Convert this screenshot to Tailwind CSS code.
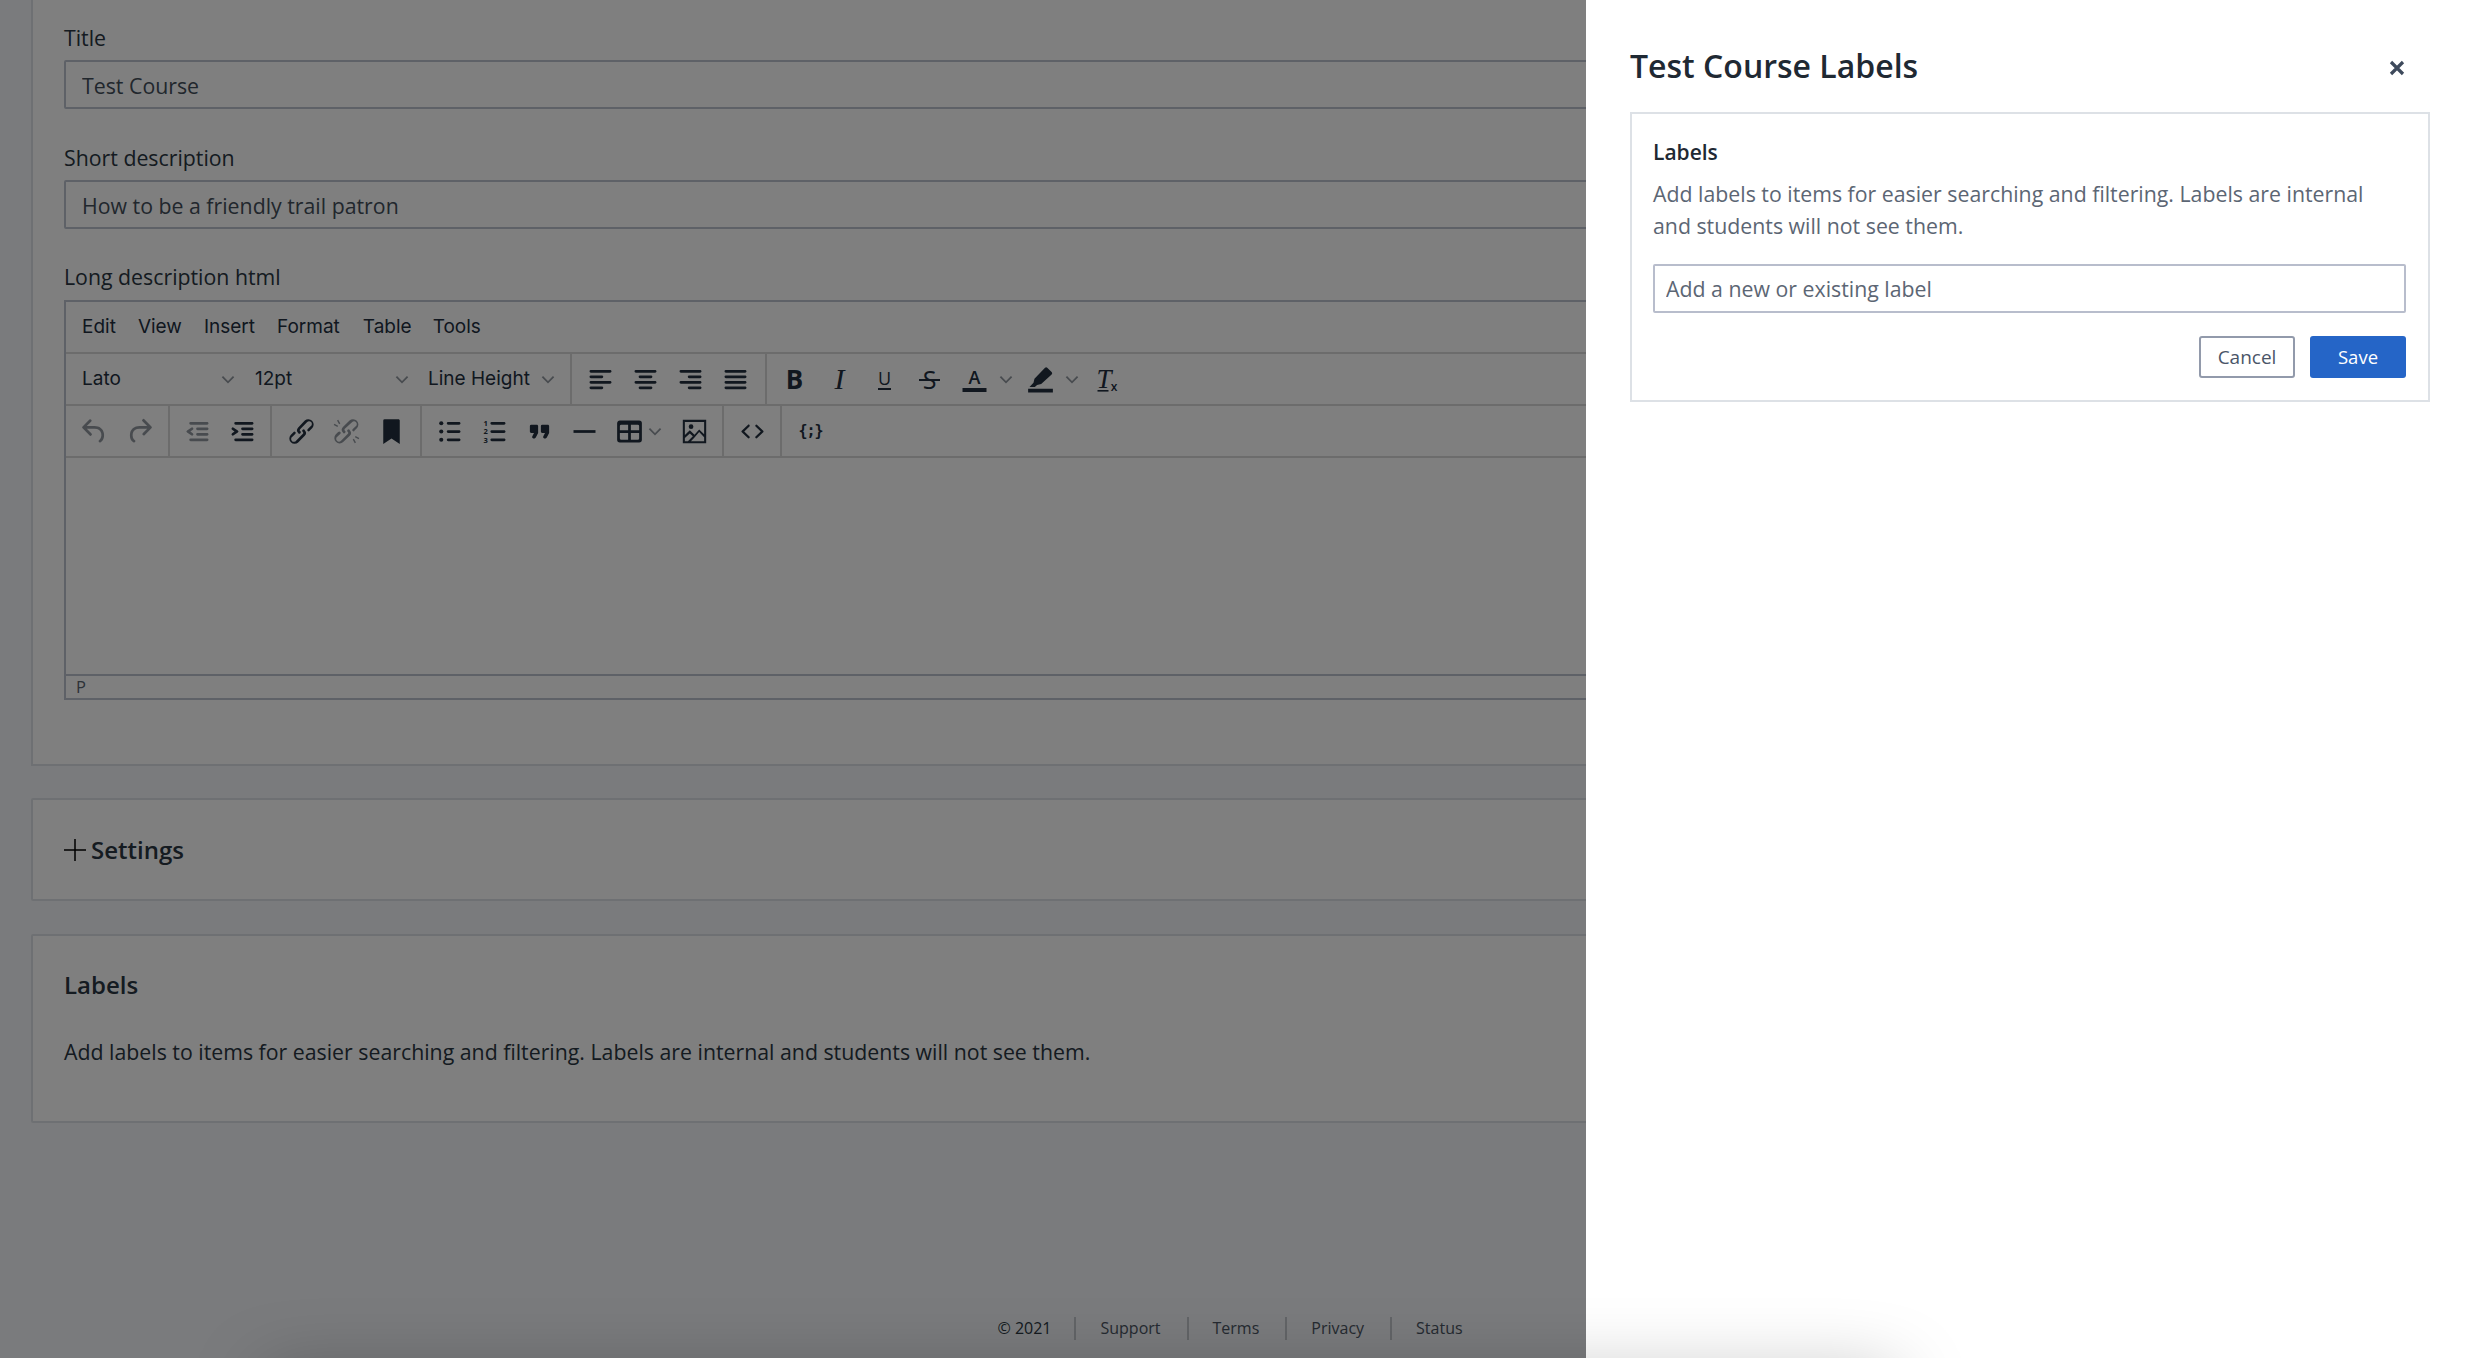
<!DOCTYPE html>
<html lang="en">
<head>
    <meta charset="UTF-8">
    <title>Test Course Labels</title>
    <script src="https://cdn.jsdelivr.net/npm/@tailwindcss/browser@4"></script>
</head>
<body class="bg-[#f4f6fa] font-['Open_Sans',sans-serif] text-[#2a3642] antialiased">
<div class="relative w-[2466px] h-[1358px] overflow-hidden">

    <!-- page behind the drawer -->
    <main class="w-[2404px] ml-[31px]">
        <section class="h-[766px] bg-white border-2 border-t-0 border-[#dde1e6] pt-[24px] px-[31px]">
            <label class="block h-[28px] text-[21.3px] leading-[28px]">Title</label>
            <input class="block w-full h-[49px] mt-[8px] pt-[1px] px-[16px] border-2 border-[#bcc2cf] rounded-[2px] text-[21.3px] text-[#434e5a] font-['Open_Sans',sans-serif]" value="Test Course">
            <label class="block h-[28px] mt-[35px] text-[21.3px] leading-[28px]">Short description</label>
            <input class="block w-full h-[49px] mt-[8px] pt-[1px] px-[16px] border-2 border-[#bcc2cf] rounded-[2px] text-[21.3px] text-[#434e5a] font-['Open_Sans',sans-serif]" value="How to be a friendly trail patron">
            <label class="block h-[28px] mt-[34px] text-[21.3px] leading-[28px]">Long description html</label>

            <div class="flex flex-col h-[400px] mt-[9px] border-2 border-[#bcc2cf] font-['Inter',sans-serif] text-[#222f3e]">
                <div class="flex items-center h-[52px] shrink-0 pl-[6px] pt-[1px] border-b-2 border-[#d8d8d8] text-[19px]">
                    <span class="px-[10px]">Edit</span>
                    <span class="pl-[12px] pr-[11px]">View</span>
                    <span class="px-[11px]">Insert</span>
                    <span class="px-[11px]">Format</span>
                    <span class="pl-[12px] pr-[10px]">Table</span>
                    <span class="px-[11px]">Tools</span>
                </div>

                <!-- toolbar row 1 -->
                <div class="flex h-[52px] shrink-0 border-b-2 border-[#d8d8d8]">
                    <div class="flex items-center w-[505.5px] pl-[6px] pt-[1px] border-r-2 border-[#d8d8d8] text-[19px]">
                        <div class="flex items-center justify-between w-[172px] pl-[10px] pr-[9px]">
                            <span>Lato</span>
                            <svg viewBox="0 0 10 6" class="w-[14px] h-[9px] fill-none stroke-[#222f3e]/50 stroke-[1.3]"><path d="M1 1l4 4 4-4"/></svg>
                        </div>
                        <div class="flex items-center justify-between w-[174px] pl-[11px] pr-[9px]">
                            <span>12pt</span>
                            <svg viewBox="0 0 10 6" class="w-[14px] h-[9px] fill-none stroke-[#222f3e]/50 stroke-[1.3]"><path d="M1 1l4 4 4-4"/></svg>
                        </div>
                        <div class="flex items-center justify-between w-[146px] pl-[10px] pr-[9px]">
                            <span class="whitespace-nowrap">Line Height</span>
                            <svg viewBox="0 0 10 6" class="w-[14px] h-[9px] fill-none stroke-[#222f3e]/50 stroke-[1.3]"><path d="M1 1l4 4 4-4"/></svg>
                        </div>
                    </div>
                    <div class="flex items-center justify-center w-[195px] border-r-2 border-[#d8d8d8]">
                        <div class="flex items-center justify-center w-[45px]"><svg viewBox="0 0 24 24" class="size-[33px] fill-[#222f3e]"><path d="M5 5h14c.6 0 1 .4 1 1s-.4 1-1 1H5a1 1 0 1 1 0-2Zm0 4h8c.6 0 1 .4 1 1s-.4 1-1 1H5a1 1 0 1 1 0-2Zm0 8h8c.6 0 1 .4 1 1s-.4 1-1 1H5a1 1 0 0 1 0-2Zm0-4h14c.6 0 1 .4 1 1s-.4 1-1 1H5a1 1 0 0 1 0-2Z"/></svg></div>
                        <div class="flex items-center justify-center w-[45px]"><svg viewBox="0 0 24 24" class="size-[33px] fill-[#222f3e]"><path d="M5 5h14c.6 0 1 .4 1 1s-.4 1-1 1H5a1 1 0 1 1 0-2Zm3 4h8c.6 0 1 .4 1 1s-.4 1-1 1H8a1 1 0 1 1 0-2Zm0 8h8c.6 0 1 .4 1 1s-.4 1-1 1H8a1 1 0 0 1 0-2Zm-3-4h14c.6 0 1 .4 1 1s-.4 1-1 1H5a1 1 0 0 1 0-2Z"/></svg></div>
                        <div class="flex items-center justify-center w-[45px]"><svg viewBox="0 0 24 24" class="size-[33px] fill-[#222f3e]"><path d="M5 5h14c.6 0 1 .4 1 1s-.4 1-1 1H5a1 1 0 1 1 0-2Zm6 4h8c.6 0 1 .4 1 1s-.4 1-1 1h-8a1 1 0 0 1 0-2Zm0 8h8c.6 0 1 .4 1 1s-.4 1-1 1h-8a1 1 0 0 1 0-2Zm-6-4h14c.6 0 1 .4 1 1s-.4 1-1 1H5a1 1 0 0 1 0-2Z"/></svg></div>
                        <div class="flex items-center justify-center w-[45px]"><svg viewBox="0 0 24 24" class="size-[33px] fill-[#222f3e]"><path d="M5 5h14c.6 0 1 .4 1 1s-.4 1-1 1H5a1 1 0 1 1 0-2Zm0 4h14c.6 0 1 .4 1 1s-.4 1-1 1H5a1 1 0 1 1 0-2Zm0 4h14c.6 0 1 .4 1 1s-.4 1-1 1H5a1 1 0 0 1 0-2Zm0 4h14c.6 0 1 .4 1 1s-.4 1-1 1H5a1 1 0 0 1 0-2Z"/></svg></div>
                    </div>
                    <div class="flex items-center pl-[5px]">
                        <div class="flex items-center justify-center w-[45px]"><svg viewBox="0 0 33 33" class="size-[33px] overflow-visible fill-[#222f3e]"><text x="16.5" y="26" text-anchor="middle" font-family="Open Sans" font-weight="700" font-size="26">B</text></svg></div>
                        <div class="flex items-center justify-center w-[45px]"><svg viewBox="0 0 33 33" class="size-[33px] overflow-visible fill-[#222f3e]"><text x="16.5" y="26" text-anchor="middle" font-family="Liberation Serif" font-style="italic" font-size="30">I</text></svg></div>
                        <div class="flex items-center justify-center w-[45px]"><svg viewBox="0 0 33 33" class="size-[33px] overflow-visible fill-[#222f3e]"><text x="16.5" y="22" text-anchor="middle" font-family="Open Sans" font-size="18">U</text><rect x="10" y="25" width="13" height="2"/></svg></div>
                        <div class="flex items-center justify-center w-[45px]"><svg viewBox="0 0 33 33" class="size-[33px] overflow-visible fill-[#222f3e]"><text x="16.5" y="26" text-anchor="middle" font-family="Open Sans" font-size="25">S</text><rect x="6" y="16" width="21" height="2"/></svg></div>
                        <div class="flex items-center w-[66.5px] pl-[6px]">
                            <svg viewBox="0 0 33 33" class="size-[33px] overflow-visible fill-[#222f3e]"><text x="16.5" y="21" text-anchor="middle" font-family="Open Sans" font-weight="600" font-size="18">A</text><rect x="4.5" y="25" width="24" height="4"/></svg>
                            <svg viewBox="0 0 10 6" class="w-[14px] h-[9px] ml-[8px] fill-none stroke-[#222f3e]/50 stroke-[1.3]"><path d="M1 1l4 4 4-4"/></svg>
                        </div>
                        <div class="flex items-center w-[66.5px] pl-[6px]">
                            <svg viewBox="0 0 24 24" class="size-[33px] fill-[#222f3e]"><path d="M15.3 3.4a1.2 1.2 0 0 1 1.6 0l3.2 3.2a1.2 1.2 0 0 1 0 1.7l-7.6 6.9-3 .8-1.6 1.4H4l2.9-3 .7-3L15.3 3.4ZM3 18.7h18V21.5H3z"/></svg>
                            <svg viewBox="0 0 10 6" class="w-[14px] h-[9px] ml-[8px] fill-none stroke-[#222f3e]/50 stroke-[1.3]"><path d="M1 1l4 4 4-4"/></svg>
                        </div>
                        <div class="flex items-center justify-center w-[45px]"><svg viewBox="0 0 33 33" class="size-[33px] overflow-visible fill-[#222f3e]"><text x="13" y="25" text-anchor="middle" font-family="Liberation Serif" font-style="italic" font-size="27">T</text><rect x="6.5" y="27" width="11" height="1.6"/><text x="23" y="28" text-anchor="middle" font-family="Open Sans" font-weight="600" font-size="12">x</text></svg></div>
                    </div>
                </div>

                <!-- toolbar row 2 -->
                <div class="flex h-[52px] shrink-0 border-b-2 border-[#d8d8d8]">
                    <div class="flex items-center justify-center w-[104px] border-r-2 border-[#d8d8d8]">
                        <div class="flex items-center justify-center w-[45px]"><svg viewBox="0 0 24 24" class="size-[33px] fill-[#222f3e]/50"><path d="M6.4 8H12c3.7 0 6.2 2 6.8 5.1.6 2.7-.4 5.6-2.3 6.8a1 1 0 0 1-1-1.8c1.1-.6 1.8-2.7 1.4-4.6-.5-2.1-2.1-3.5-4.9-3.5H6.4l3.3 3.3a1 1 0 1 1-1.4 1.4l-5-5a1 1 0 0 1 0-1.4l5-5a1 1 0 0 1 1.4 1.4L6.4 8Z"/></svg></div>
                        <div class="flex items-center justify-center w-[45px]"><svg viewBox="0 0 24 24" class="size-[33px] fill-[#222f3e]/50"><path d="M17.6 10H12c-2.8 0-4.4 1.4-4.9 3.5-.4 2 .3 4 1.4 4.6a1 1 0 1 1-1 1.8c-2-1.2-2.9-4.1-2.3-6.8.6-3 3-5.1 6.8-5.1h5.6l-3.3-3.3a1 1 0 1 1 1.4-1.4l5 5a1 1 0 0 1 0 1.4l-5 5a1 1 0 0 1-1.4-1.4l3.3-3.3Z"/></svg></div>
                    </div>
                    <div class="flex items-center justify-center w-[102px] border-r-2 border-[#d8d8d8]">
                        <div class="flex items-center justify-center w-[45px]"><svg viewBox="0 0 24 24" class="size-[33px] fill-[#222f3e]/50"><path d="M7 5h12c.6 0 1 .4 1 1s-.4 1-1 1H7a1 1 0 1 1 0-2Zm5 4h7c.6 0 1 .4 1 1s-.4 1-1 1h-7a1 1 0 0 1 0-2Zm0 4h7c.6 0 1 .4 1 1s-.4 1-1 1h-7a1 1 0 0 1 0-2Zm-5 4h12a1 1 0 0 1 0 2H7a1 1 0 0 1 0-2Zm1.6-3.8a1 1 0 0 1-1.2 1.6l-3-2a1 1 0 0 1 0-1.6l3-2a1 1 0 0 1 1.2 1.6L6.8 12l1.8 1.2Z"/></svg></div>
                        <div class="flex items-center justify-center w-[45px]"><svg viewBox="0 0 24 24" class="size-[33px] fill-[#222f3e]"><path d="M7 5h12c.6 0 1 .4 1 1s-.4 1-1 1H7a1 1 0 1 1 0-2Zm5 4h7c.6 0 1 .4 1 1s-.4 1-1 1h-7a1 1 0 0 1 0-2Zm0 4h7c.6 0 1 .4 1 1s-.4 1-1 1h-7a1 1 0 0 1 0-2Zm-5 4h12a1 1 0 0 1 0 2H7a1 1 0 0 1 0-2Zm-2.6-3.8L6.2 12l-1.8-1.2a1 1 0 0 1 1.2-1.6l3 2a1 1 0 0 1 0 1.6l-3 2a1 1 0 1 1-1.2-1.6Z"/></svg></div>
                    </div>
                    <div class="flex items-center justify-center w-[150px] border-r-2 border-[#d8d8d8]">
                        <div class="flex items-center justify-center w-[45px]"><svg viewBox="0 0 24 24" class="size-[33px] fill-[#222f3e]"><path d="M6.2 12.3a1 1 0 0 1 1.4 1.4l-2 2a2 2 0 1 0 2.6 2.8l4.8-4.8a1 1 0 0 0 0-1.4 1 1 0 1 1 1.4-1.3 2.9 2.9 0 0 1 0 4L9.6 20a3.9 3.9 0 0 1-5.5-5.5l2-2Zm11.6-.6a1 1 0 0 1-1.4-1.4l2-2a2 2 0 1 0-2.6-2.8L11 10.3a1 1 0 0 0 0 1.4 1 1 0 1 1-1.4 1.3 2.9 2.9 0 0 1 0-4L14.4 4a3.9 3.9 0 0 1 5.5 5.5l-2 2Z"/></svg></div>
                        <div class="flex items-center justify-center w-[45px]"><svg viewBox="0 0 24 24" class="size-[33px] fill-[#222f3e]/50"><path d="M6.2 12.3a1 1 0 0 1 1.4 1.4l-2.1 2a2 2 0 1 0 2.7 2.8l4.8-4.8a1 1 0 0 0 0-1.4 1 1 0 1 1 1.4-1.3 2.9 2.9 0 0 1 0 4l-4.8 4.7a3.9 3.9 0 0 1-5.5-5.5l2-2Zm11.6-.6a1 1 0 0 1-1.4-1.4l2.1-2a2 2 0 1 0-2.7-2.8L10.8 10a1 1 0 0 0 0 1.4 1 1 0 1 1-1.4 1.3 2.9 2.9 0 0 1 0-4L14.2 4a3.9 3.9 0 0 1 5.5 5.5l-2 2ZM6 3.5l1.5 2.7-.9.5L5.1 4ZM3.2 6.4l2.7 1.4-.5.9-2.7-1.4ZM18 20.5l-1.5-2.7.9-.5 1.5 2.7Zm2.8-2.9-2.7-1.4.5-.9 2.7 1.4Z"/></svg></div>
                        <div class="flex items-center justify-center w-[45px]"><svg viewBox="0 0 24 24" class="size-[33px] fill-[#222f3e]"><path d="M6 4v17l6-4 6 4V4c0-.6-.4-1-1-1H7a1 1 0 0 0-1 1Z"/></svg></div>
                    </div>
                    <div class="flex items-center justify-center w-[302px] border-r-2 border-[#d8d8d8]">
                        <div class="flex items-center justify-center w-[45px]"><svg viewBox="0 0 24 24" class="size-[33px] fill-[#222f3e]"><path d="M11 5h8c.6 0 1 .4 1 1s-.4 1-1 1h-8a1 1 0 0 1 0-2Zm0 6h8c.6 0 1 .4 1 1s-.4 1-1 1h-8a1 1 0 0 1 0-2Zm0 6h8c.6 0 1 .4 1 1s-.4 1-1 1h-8a1 1 0 0 1 0-2Z"/><circle cx="6" cy="6" r="1.5"/><circle cx="6" cy="12" r="1.5"/><circle cx="6" cy="18" r="1.5"/></svg></div>
                        <div class="flex items-center justify-center w-[45px]"><svg viewBox="0 0 24 24" class="size-[33px] overflow-visible fill-[#222f3e]"><path d="M10 5h9c.6 0 1 .4 1 1s-.4 1-1 1h-9a1 1 0 1 1 0-2Zm0 6h9c.6 0 1 .4 1 1s-.4 1-1 1h-9a1 1 0 0 1 0-2Zm0 6h9c.6 0 1 .4 1 1s-.4 1-1 1h-9a1 1 0 0 1 0-2Z"/><text x="5.5" y="8" text-anchor="middle" font-family="Open Sans" font-weight="700" font-size="5.5">1</text><text x="5.5" y="14" text-anchor="middle" font-family="Open Sans" font-weight="700" font-size="5.5">2</text><text x="5.5" y="20" text-anchor="middle" font-family="Open Sans" font-weight="700" font-size="5.5">3</text></svg></div>
                        <div class="flex items-center justify-center w-[45px]"><svg viewBox="0 0 24 24" class="size-[33px] fill-[#222f3e]"><path d="M7.5 17h.9c.4 0 .7-.2.9-.6L11 13V8c0-.6-.4-1-1-1H6a1 1 0 0 0-1 1v4c0 .6.4 1 1 1h2l-1.3 2.7a1 1 0 0 0 .8 1.3Zm8 0h.9c.4 0 .7-.2.9-.6L19 13V8c0-.6-.4-1-1-1h-4a1 1 0 0 0-1 1v4c0 .6.4 1 1 1h2l-1.3 2.7a1 1 0 0 0 .8 1.3Z"/></svg></div>
                        <div class="flex items-center justify-center w-[45px]"><svg viewBox="0 0 24 24" class="size-[33px] fill-[#222f3e]"><path d="M4 11h16v2H4z"/></svg></div>
                        <div class="flex items-center w-[64.5px] pl-[6px]">
                            <svg viewBox="0 0 24 24" class="size-[33px] fill-[#222f3e]"><path fill-rule="evenodd" d="M5 4h14a2 2 0 0 1 2 2v12a2 2 0 0 1-2 2H5a2 2 0 0 1-2-2V6c0-1.100.9-2 2-2Zm0 7h6V7H6a1 1 0 0 0-1 1ZM13 7v4h6V8a1 1 0 0 0-1-1ZM5 13v4a1 1 0 0 0 1 1h5v-5Zm8 0v5h5a1 1 0 0 0 1-1v-4Z"/></svg>
                            <svg viewBox="0 0 10 6" class="w-[14px] h-[9px] ml-[2px] fill-none stroke-[#222f3e]/50 stroke-[1.3]"><path d="M1 1l4 4 4-4"/></svg>
                        </div>
                        <div class="flex items-center justify-center w-[45px]"><svg viewBox="0 0 24 24" class="size-[33px] fill-[#222f3e]"><path fill-rule="evenodd" d="M3.500 3.500h17v17h-17ZM5 5v9.500l3.600-3.400 3.400 3.200 3.400-3.800L19 14V5ZM5 16.800V19h2.200l3.600-3.500-2.200-2.100ZM9.400 19H19v-2.800l-3.600-3.800-3.400 3.900Z"/><circle cx="9.500" cy="8.500" r="1.700"/></svg></div>
                    </div>
                    <div class="flex items-center justify-center w-[58px] border-r-2 border-[#d8d8d8]">
                        <svg viewBox="0 0 24 24" class="size-[33px] fill-[#222f3e]"><path d="M9.800 15.700c.3.3.3.8 0 1-.3.4-.9.4-1.200 0l-4.400-4.100a.8.8 0 0 1 0-1.200l4.400-4.200c.3-.3.9-.3 1.200 0 .3.300.3.800 0 1.100L6 12l3.800 3.700ZM14.200 15.700c-.3.3-.3.8 0 1 .4.400.9.400 1.200 0l4.400-4.100c.3-.3.300-.9 0-1.200l-4.400-4.200a.8.8 0 0 0-1.200 0c-.3.3-.3.8 0 1.100L18 12l-3.800 3.700Z"/></svg>
                    </div>
                    <div class="flex items-center w-[57px] justify-center">
                        <span class="font-['DejaVu_Sans_Mono',monospace] font-bold text-[15px] tracking-[-1px]">{;}</span>
                    </div>
                </div>

                <div class="flex-1"></div>
                <div class="flex items-center h-[24px] shrink-0 pl-[10px] border-t-2 border-[#bcc2cf] text-[16.5px] text-[#5a6470] font-['Open_Sans',sans-serif]">P</div>
            </div>
        </section>

        <section class="flex items-center gap-[5px] h-[103px] mt-[32px] px-[31px] bg-white border-2 border-[#dde1e6] rounded-[2px]">
            <svg viewBox="0 0 22 22" class="size-[22px] stroke-black stroke-[1.5]"><path d="M0 11h22M11 0v22"/></svg>
            <h2 class="text-[24px] font-semibold">Settings</h2>
        </section>

        <section class="h-[189px] mt-[33px] px-[31px] pt-[32px] bg-white border-2 border-[#dde1e6] rounded-[2px]">
            <h2 class="text-[24px] leading-[34px] font-semibold">Labels</h2>
            <p class="mt-[34px] text-[21.3px] leading-[32px] text-[#2a3642]">Add labels to items for easier searching and filtering. Labels are internal and students will not see them.</p>
        </section>
    </main>

    <footer class="flex justify-center mt-[194px] pr-[6px] text-[16px] leading-[23px] text-[#4b5563]">
        <span class="pr-[23px] text-[#2a3642]">© 2021</span>
        <a class="pl-[24px] pr-[26px] border-l-2 border-[#c4c8cf]">Support</a>
        <a class="pl-[24px] pr-[26px] border-l-2 border-[#c4c8cf]">Terms</a>
        <a class="pl-[24px] pr-[26px] border-l-2 border-[#c4c8cf]">Privacy</a>
        <a class="pl-[24px] border-l-2 border-[#c4c8cf]">Status</a>
    </footer>

    <!-- dim layer -->
    <div class="absolute inset-0 bg-black/50"></div>

    <!-- labels drawer -->
    <aside class="absolute top-0 right-0 w-[880px] h-full pt-[46px] pl-[44px] bg-white">
        <div class="flex items-center justify-between w-[798px] h-[40px] pr-[23px]">
            <h1 class="text-[32px] leading-[40px] font-semibold text-[#1f2933]">Test Course Labels</h1>
            <svg viewBox="0 0 16 16" class="size-[16px] mt-[3px] stroke-[#3e4a5c] stroke-[3.2]"><path d="M2 2l12 12M14 2L2 14"/></svg>
        </div>
        <div class="w-[800px] mt-[26px] pt-[24px] pb-[22px] pl-[21px] pr-[22px] border-2 border-[#dde1e6]">
            <h2 class="text-[21px] leading-[28px] font-semibold text-[#1f2933]">Labels</h2>
            <p class="mt-[12px] text-[21.3px] leading-[32px] text-[#5c6674]">Add labels to items for easier searching and filtering. Labels are internal and students will not see them.</p>
            <input class="block w-full h-[49px] mt-[22px] px-[11px] border-2 border-[#b8bdcc] rounded-[2px] text-[21.3px] placeholder:text-[#5c6674] font-['Open_Sans',sans-serif]" placeholder="Add a new or existing label">
            <div class="flex justify-end gap-[15px] mt-[23px]">
                <button class="w-[96px] h-[42px] border-2 border-[#929aab] rounded-[3px] text-[19px] text-[#4a5568]">Cancel</button>
                <button class="w-[96px] h-[42px] rounded-[3px] bg-[#2565c7] text-[18.5px] font-medium text-white">Save</button>
            </div>
        </div>
    </aside>

    <!-- soft shadow from below the fold -->
    <div class="absolute left-[260px] top-[1375px] w-[1640px] h-[40px] rounded-full bg-black/30 blur-[35px] pointer-events-none"></div>
</div>
</body>
</html>
